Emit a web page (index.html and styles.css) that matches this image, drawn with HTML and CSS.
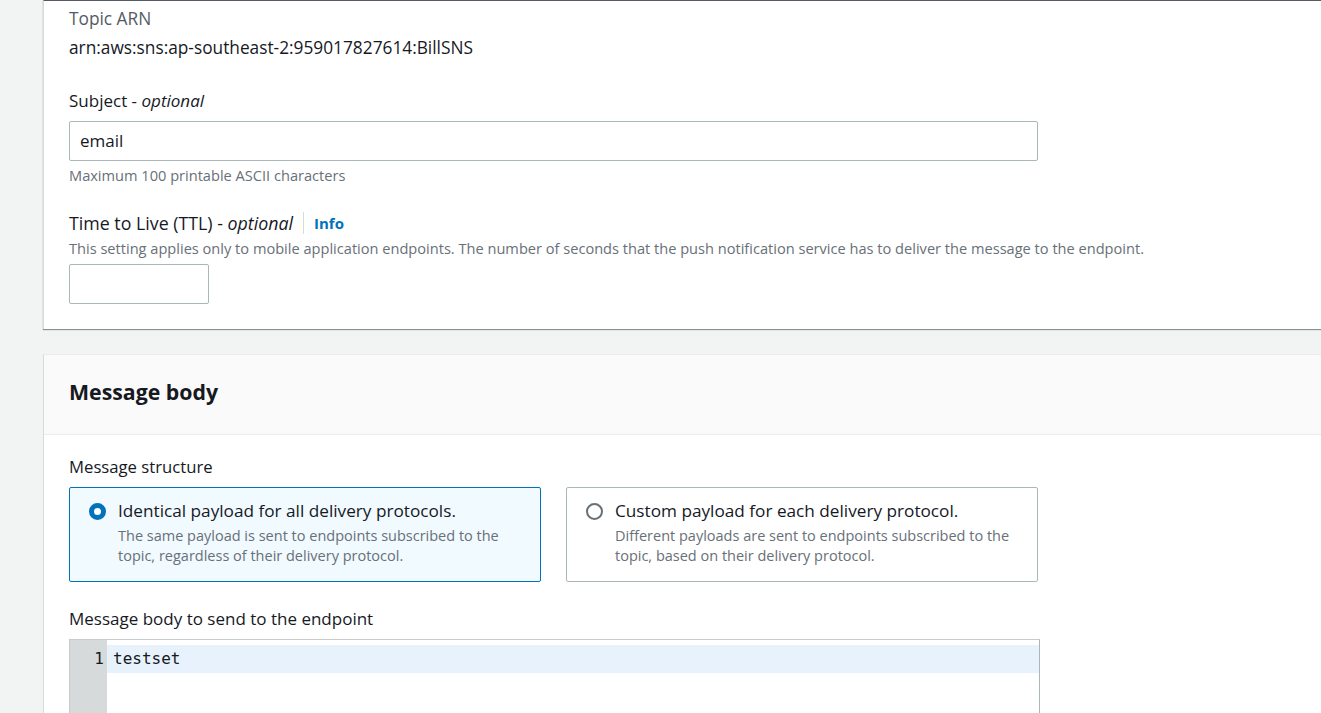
FILE: index.html
```html
<!DOCTYPE html>
<html lang="en">
<head>
<meta charset="utf-8">
<title>Publish message</title>
<link rel="stylesheet" href="styles.css">
</head>
<body>
<div class="page">
  <section class="card card-details">
    <div class="card-body">
      <div class="field">
        <div class="label label-muted">Topic ARN</div>
        <div class="value">arn:aws:sns:ap-southeast-2:959017827614:BillSNS</div>
      </div>
      <div class="field field-subject">
        <div class="label">Subject - <i>optional</i></div>
        <div class="input input-wide">email</div>
        <div class="hint">Maximum 100 printable ASCII characters</div>
      </div>
      <div class="field field-ttl">
        <div class="label label-row"><span class="label-text">Time to Live (TTL) - <i>optional</i></span><span class="info">Info</span></div>
        <div class="hint hint-desc">This setting applies only to mobile application endpoints. The number of seconds that the push notification service has to deliver the message to the endpoint.</div>
        <div class="input input-small"></div>
      </div>
    </div>
  </section>

  <section class="card card-message">
    <header class="card-header"><h2>Message body</h2></header>
    <div class="card-body card-body-message">
      <div class="label">Message structure</div>
      <div class="tiles">
        <div class="tile tile-selected">
          <span class="radio radio-on"></span>
          <div class="tile-text">
            <div class="tile-title">Identical payload for all delivery protocols.</div>
            <div class="tile-desc">The same payload is sent to endpoints subscribed to the topic, regardless of their delivery protocol.</div>
          </div>
        </div>
        <div class="tile">
          <span class="radio"></span>
          <div class="tile-text">
            <div class="tile-title">Custom payload for each delivery protocol.</div>
            <div class="tile-desc">Different payloads are sent to endpoints subscribed to the topic, based on their delivery protocol.</div>
          </div>
        </div>
      </div>
      <div class="label label-editor">Message body to send to the endpoint</div>
      <div class="editor">
        <div class="gutter"><div class="ln">1</div></div>
        <div class="code"><div class="code-line">testset</div></div>
      </div>
    </div>
  </section>
</div>
</body>
</html>
```
FILE: styles.css
```css
html, body {
  margin: 0;
  padding: 0;
}
body {
  background: #f2f3f3;
  font-family: "Open Sans", "Noto Sans", sans-serif;
  color: #16191f;
  overflow: hidden;
  height: 713px;
}
.page {
  padding-left: 43px;
}
.card {
  background: #fff;
  border-left: 1px solid #d5dbdb;
}
.card-details {
  border-top: 1px solid #545b64;
  box-shadow: 0 1px 1px 0 #879596;
  height: 329px;
  box-sizing: border-box;
}
.card-message {
  margin-top: 25px;
  height: 400px;
  border-top: 1px solid #eaeded;
}
.card-body {
  padding: 6px 0 0 25px;
}
.field {
  display: flex;
  flex-direction: column;
}
.label {
  font-size: 17px;
  line-height: 24px;
  color: #16191f;
}
.label-muted {
  color: #545b64;
  font-size: 17.3px;
}
.value {
  font-size: 17.3px;
  line-height: 24px;
  margin-top: 5px;
}
.field-subject {
  margin-top: 29px;
}
.field-subject .label {
  margin-bottom: 8px;
}
.input {
  box-sizing: border-box;
  border: 1px solid #aab7b8;
  border-radius: 2px;
  height: 40px;
  background: #fff;
  font-size: 17px;
  line-height: 38px;
  padding: 0 10px;
  color: #16191f;
}
.input-wide {
  width: 969px;
}
.input-small {
  width: 140px;
  margin-top: 6px;
}
.hint {
  font-size: 14.6px;
  line-height: 20px;
  color: #687078;
  margin-top: 4px;
}
.field-ttl {
  margin-top: 26px;
}
.label-row {
  display: flex;
  align-items: center;
}
.label-text {
  padding-right: 10px;
  border-right: 1px solid #d5dbdb;
  line-height: 22px;
  font-size: 17.8px;
}
.info {
  font-size: 15px;
  font-weight: 700;
  color: #0073bb;
  padding-left: 10px;
}
.hint-desc {
  margin-top: 3px;
}
.card-header {
  background: #fafafa;
  height: 80px;
  border-bottom: 1px solid #eaeded;
  box-sizing: border-box;
  padding: 23px 0 0 25px;
}
.card-header h2 {
  margin: 0;
  font-size: 21.3px;
  line-height: 28px;
  font-weight: 700;
  color: #16191f;
}
.card-body-message {
  padding-top: 20px;
}
.card-body-message > .label {
  font-size: 16.7px;
}
.tiles {
  display: flex;
  gap: 25px;
  margin-top: 8px;
}
.tile {
  box-sizing: border-box;
  width: 472px;
  height: 95px;
  border: 1px solid #aab7b8;
  border-radius: 2px;
  display: flex;
  align-items: flex-start;
  padding: 11px 20px;
  gap: 12px;
}
.tile-selected {
  border-color: #0073bb;
  background: #f1faff;
}
.radio {
  flex: none;
  width: 17px;
  height: 17px;
  box-sizing: border-box;
  border: 2px solid #687078;
  border-radius: 50%;
  margin-top: 4px;
  margin-left: -1px;
  background: #fff;
}
.radio-on {
  border: 5px solid #0073bb;
}
.tile-title {
  font-size: 17.2px;
  line-height: 24px;
}
.tile-desc {
  font-size: 14.5px;
  line-height: 20px;
  color: #687078;
  margin-top: 3px;
}
.label-editor {
  margin-top: 25px;
}
.card-body-message > .label-editor {
  font-size: 17px;
}
.editor {
  margin-top: 8px;
  width: 971px;
  height: 120px;
  box-sizing: border-box;
  border: 1px solid #c6cccc;
  border-right-color: #aab7b8;
  display: flex;
}
.gutter {
  width: 37px;
  background: #d6dada;
  flex: none;
  padding-top: 5px;
}
.ln {
  font-family: "DejaVu Sans Mono", monospace;
  font-size: 16px;
  line-height: 28px;
  text-align: right;
  padding-right: 3px;
  color: #16191f;
}
.code {
  flex: 1;
  padding-top: 5px;
}
.code-line {
  background: #e8f2fc;
  font-family: "DejaVu Sans Mono", monospace;
  font-size: 16px;
  line-height: 28px;
  padding-left: 6px;
}
```
